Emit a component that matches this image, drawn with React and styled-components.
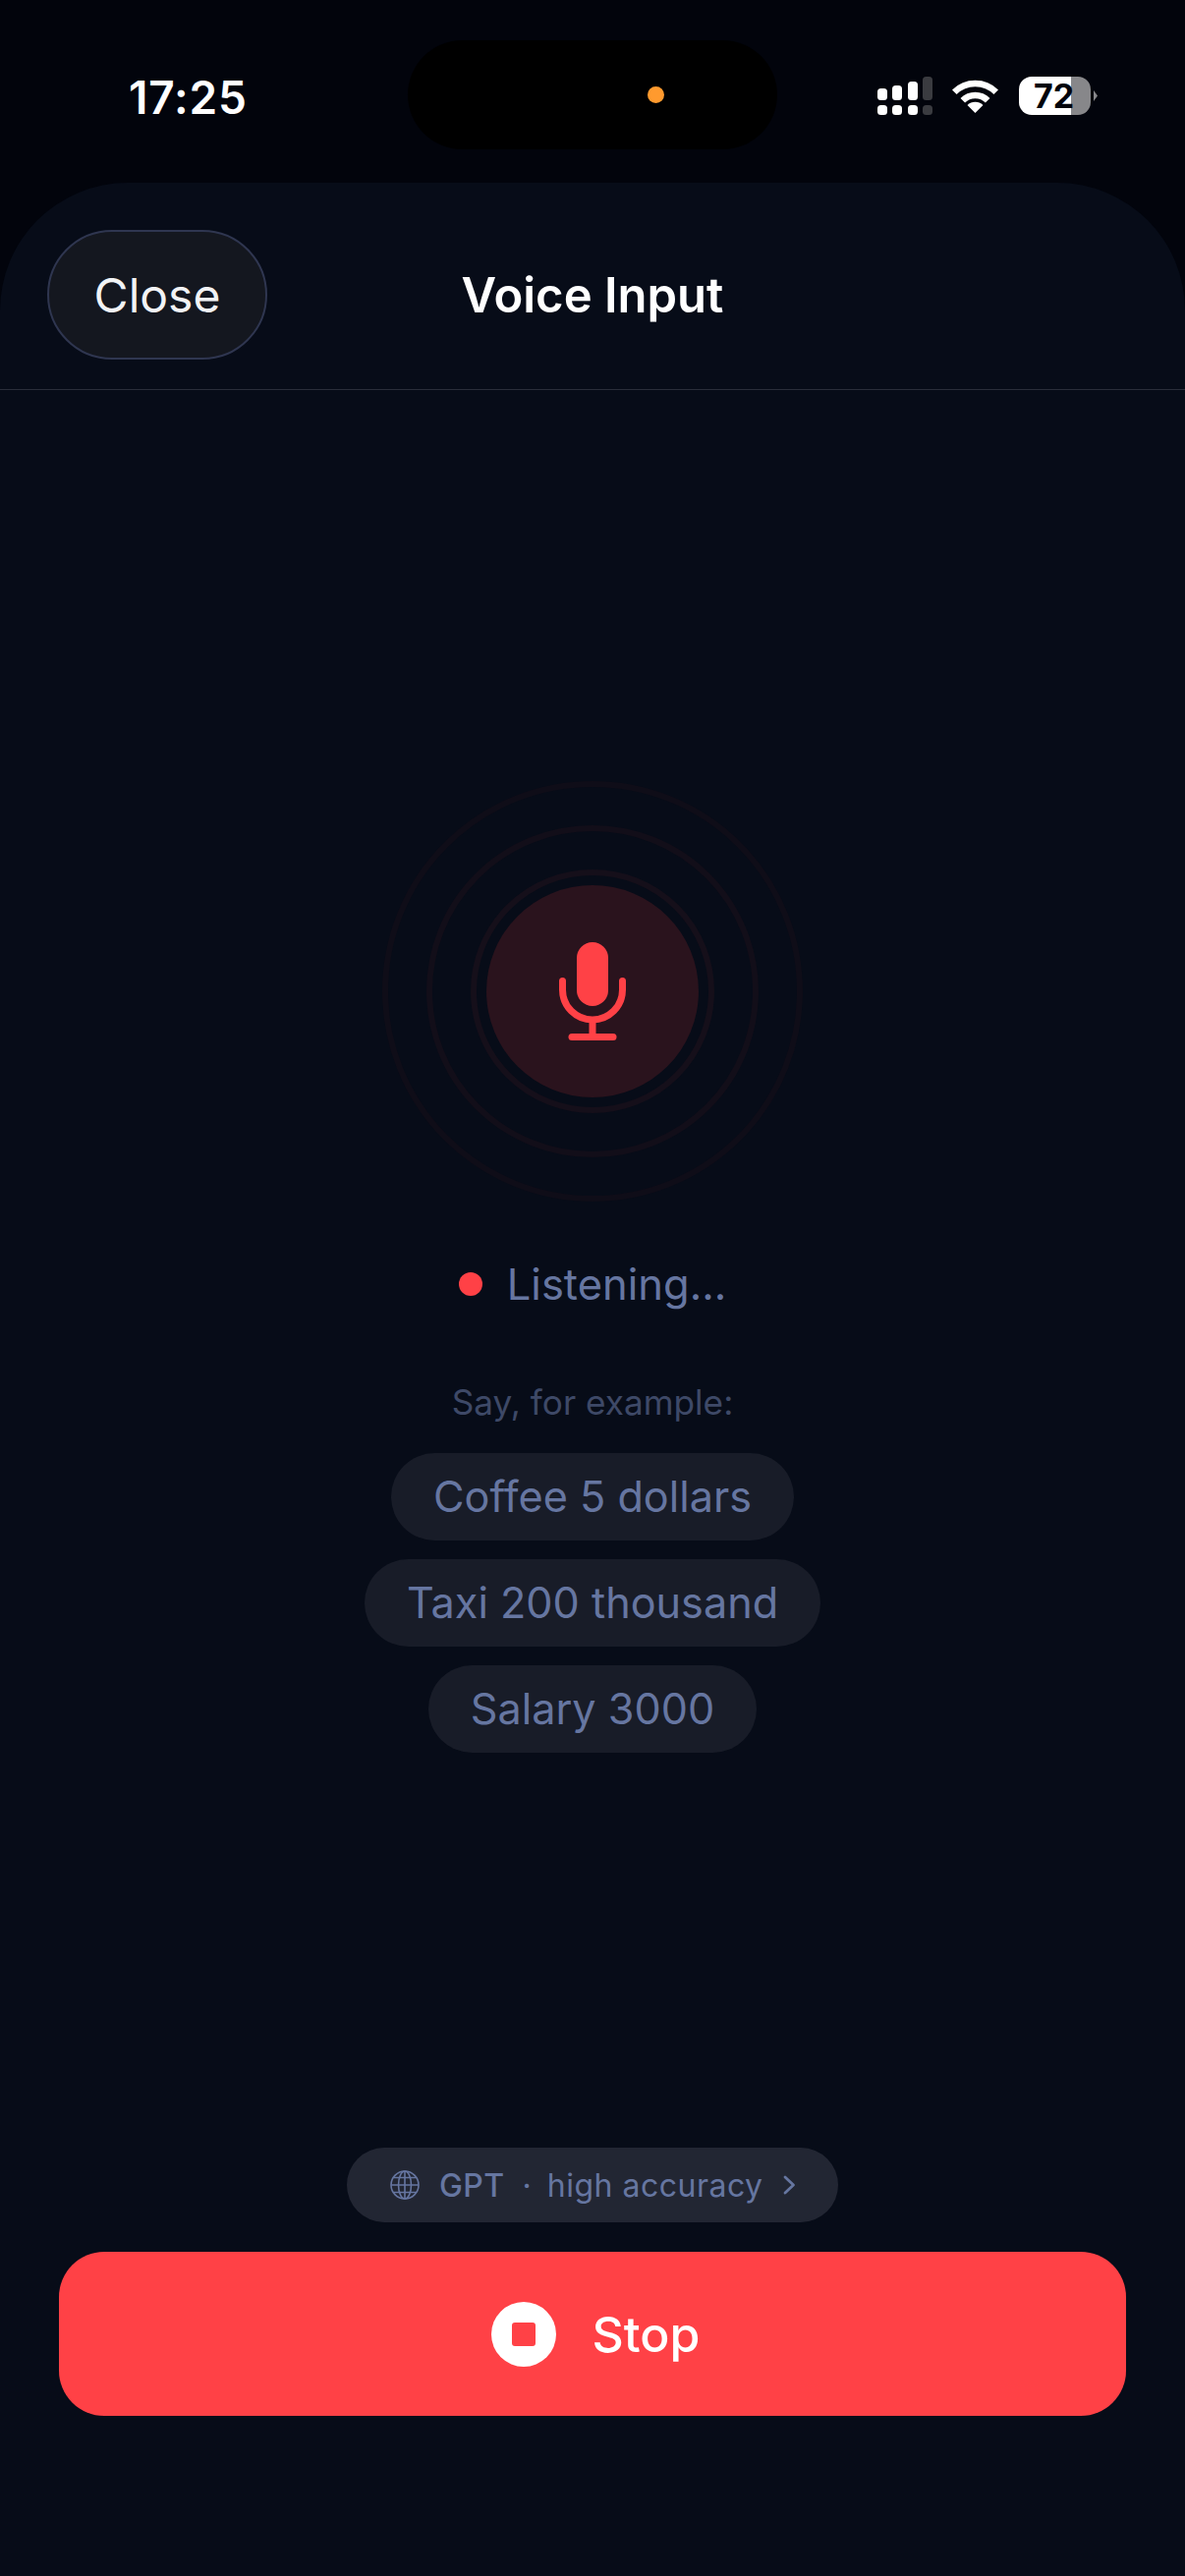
import React from "react";
import styled, { createGlobalStyle } from "styled-components";

const Global = createGlobalStyle`
  html, body { margin: 0; padding: 0; background: #02040c; }
  * { box-sizing: border-box; }
  #root { width: 1206px; }
`;

const Screen = styled.div`
  width: 1206px;
  height: 2622px;
  display: flex;
  flex-direction: column;
  overflow: hidden;
  background: #02040c;
  font-family: Inter, "Noto Sans", sans-serif;
  -webkit-font-smoothing: antialiased;
`;

const StatusBar = styled.header`
  height: 186px;
  flex: none;
  display: grid;
  grid-template-columns: 415px 376px 415px;
  align-items: start;
`;

const Time = styled.div`
  padding: 74px 0 0 131px;
  font-size: 46px;
  line-height: 50px;
  font-weight: 600;
  color: #fff;
  letter-spacing: 0.8px;
`;

const Island = styled.div`
  margin-top: 41px;
  height: 111px;
  border-radius: 56px;
  background: #000;
  display: flex;
  align-items: center;
  justify-content: flex-end;
  padding-right: 115px;
`;

const OrangeDot = styled.span`
  width: 17px;
  height: 17px;
  border-radius: 50%;
  background: #ff9a2e;
`;

const Indicators = styled.div`
  margin: 78px 0 0 102px;
  display: flex;
  align-items: flex-start;
`;

const SignalIcon = styled.svg`
  display: block;
  width: 56px;
  height: 39px;
`;

const WifiIcon = styled.svg`
  display: block;
  width: 49px;
  height: 34px;
  margin: 3px 0 0 19px;
`;

const Battery = styled.div`
  width: 73px;
  height: 39px;
  margin-left: 20px;
  border-radius: 13px;
  background: linear-gradient(90deg, #fff 0 53px, #87878a 53px 100%);
  display: flex;
  align-items: center;
  justify-content: center;
  font-size: 34px;
  line-height: 39px;
  font-weight: 700;
  color: #02040c;
  padding-right: 2px;
`;

const BatteryNub = styled.span`
  width: 4px;
  height: 11px;
  margin: 14px 0 0 3px;
  background: #87878a;
  border-radius: 0 3px 3px 0;
  clip-path: polygon(0 0, 100% 50%, 0 100%);
`;

const Sheet = styled.main`
  flex: 1;
  min-height: 0;
  display: flex;
  flex-direction: column;
  background: #070c18;
  border-radius: 130px 130px 0 0;
`;

const SheetHeader = styled.div`
  height: 211px;
  flex: none;
  display: grid;
  grid-template-columns: 1fr auto 1fr;
  align-items: center;
  padding: 18px 48px 0;
  border-bottom: 1.5px solid #2a2e3a;
`;

const CloseButton = styled.button`
  justify-self: start;
  width: 224px;
  height: 132px;
  border-radius: 66px;
  border: 2px solid #2f3650;
  background: #14171f;
  color: #f2f3f5;
  font-family: inherit;
  font-size: 48px;
  font-weight: 400;
  padding: 0;
`;

const Title = styled.h1`
  margin: 2px 0 0;
  font-size: 49px;
  line-height: 60px;
  font-weight: 600;
  color: #fff;
`;

const Content = styled.section`
  flex: 1;
  min-height: 0;
  display: flex;
  flex-direction: column;
  align-items: center;
  padding-top: 398px;
`;

const Rings = styled.div`
  width: 428px;
  height: 428px;
  display: grid;
  place-items: center;
  flex: none;
  & > * { grid-area: 1 / 1; }
`;

const Ring = styled.div`
  width: ${(p) => p.$size}px;
  height: ${(p) => p.$size}px;
  border-radius: 50%;
  border: 6px solid ${(p) => p.$color};
`;

const MicCircle = styled.div`
  width: 216px;
  height: 216px;
  border-radius: 50%;
  background: #2a131d;
  display: flex;
  align-items: center;
  justify-content: center;
`;

const MicIcon = styled.svg`
  display: block;
  width: 68px;
  height: 100px;
  margin-left: -1px;
`;

const StatusRow = styled.div`
  margin-top: 57px;
  display: flex;
  align-items: center;
  gap: 25px;
  height: 54px;
`;

const RecDot = styled.span`
  width: 24px;
  height: 24px;
  border-radius: 50%;
  background: #ff4146;
`;

const StatusText = styled.span`
  font-size: 43.5px;
  line-height: 54px;
  color: #6676a1;
`;

const HintLabel = styled.p`
  margin: 71px 0 0;
  font-size: 35.2px;
  line-height: 44px;
  color: #3e4967;
`;

const Chips = styled.div`
  margin-top: 30px;
  display: flex;
  flex-direction: column;
  align-items: center;
  gap: 19px;
`;

const Chip = styled.div`
  height: 89px;
  padding: 0 43px;
  border-radius: 45px;
  background: #181c28;
  color: #6676a1;
  font-size: 43.2px;
  line-height: 89px;
  white-space: nowrap;
`;

const Footer = styled.div`
  margin-top: auto;
  width: 100%;
  padding: 0 60px 163px;
  display: flex;
  flex-direction: column;
  align-items: center;
`;

const EnginePill = styled.button`
  width: 500px;
  height: 76px;
  border: 0;
  border-radius: 38px;
  background: #222633;
  color: #6676a1;
  display: flex;
  align-items: center;
  padding: 0 0 0 44px;
  font-family: inherit;
  font-size: 32px;
`;

const GlobeIcon = styled.svg`
  display: block;
  width: 30px;
  height: 30px;
  flex: none;
`;

const EngineName = styled.span`
  margin-left: 20px;
  font-weight: 500;
  letter-spacing: 0.4px;
`;

const Separator = styled.span`
  margin-left: 18px;
`;

const EngineNote = styled.span`
  margin-left: 16px;
  letter-spacing: 0.5px;
`;

const Chevron = styled.svg`
  display: block;
  width: 13px;
  height: 20px;
  margin-left: 20px;
`;

const StopButton = styled.button`
  margin-top: 30px;
  width: 100%;
  height: 167px;
  border: 0;
  border-radius: 46px;
  background: #ff4146;
  color: #fff;
  font-family: inherit;
  font-size: 50px;
  font-weight: 550;
  display: flex;
  align-items: center;
  justify-content: center;
  gap: 37px;
  padding: 0 0 0 6px;
`;

const StopBadge = styled.span`
  width: 66px;
  height: 66px;
  border-radius: 50%;
  background: #fff;
  display: flex;
  align-items: center;
  justify-content: center;
`;

const StopSquare = styled.span`
  width: 24px;
  height: 24px;
  border-radius: 3px;
  background: #ff4146;
`;

export default function App() {
  return (
    <Screen>
      <Global />
      <StatusBar>
        <Time>17:25</Time>
        <Island>
          <OrangeDot />
        </Island>
        <Indicators>
          <SignalIcon viewBox="0 0 56 39">
            <g fill="#fff">
              <rect x="0" y="12" width="10" height="12" rx="3.5" />
              <rect x="15" y="9" width="10" height="15" rx="3.5" />
              <rect x="31" y="5" width="10" height="19" rx="3.5" />
              <rect x="0" y="29" width="10" height="10" rx="3.5" />
              <rect x="15" y="29" width="10" height="10" rx="3.5" />
              <rect x="31" y="29" width="10" height="10" rx="3.5" />
            </g>
            <g fill="#3a3b40">
              <rect x="46" y="0" width="10" height="24" rx="3.5" />
              <rect x="46" y="29" width="10" height="10" rx="3.5" />
            </g>
          </SignalIcon>
          <WifiIcon viewBox="0 0 49 34">
            <g fill="none" stroke="#fff" strokeWidth="6.5">
              <path d="M3.3 12.8a30 30 0 0 1 42.4 0" />
              <path d="M11.8 21.3a18 18 0 0 1 25.4 0" />
            </g>
            <path d="M24.5 34 L16.5 26 a11.5 11.5 0 0 1 16 0 Z" fill="#fff" />
          </WifiIcon>
          <Battery>72</Battery>
          <BatteryNub />
        </Indicators>
      </StatusBar>
      <Sheet>
        <SheetHeader>
          <CloseButton>Close</CloseButton>
          <Title>Voice Input</Title>
        </SheetHeader>
        <Content>
          <Rings>
            <Ring $size={428} $color="#0f0d18" />
            <Ring $size={338} $color="#120e19" />
            <Ring $size={248} $color="#150f1a" />
            <MicCircle>
              <MicIcon viewBox="0 0 68 100">
                <rect x="18" y="0" width="32" height="65" rx="16" fill="#ff4146" />
                <g fill="none" stroke="#ff4146" strokeWidth="7" strokeLinecap="round">
                  <path d="M3.5 39.5v9a30.5 30.5 0 0 0 61 0v-9" />
                  <path d="M34 79v17" strokeLinecap="butt" />
                  <path d="M13 96.500h42" />
                </g>
              </MicIcon>
            </MicCircle>
          </Rings>
          <StatusRow>
            <RecDot />
            <StatusText>Listening...</StatusText>
          </StatusRow>
          <HintLabel>Say, for example:</HintLabel>
          <Chips>
            <Chip>Coffee 5 dollars</Chip>
            <Chip>Taxi 200 thousand</Chip>
            <Chip>Salary 3000</Chip>
          </Chips>
          <Footer>
            <EnginePill>
              <GlobeIcon viewBox="0 0 30 30" fill="none" stroke="#6676a1" strokeWidth="1.6">
                <circle cx="15" cy="15" r="14" />
                <ellipse cx="15" cy="15" rx="6.500" ry="14" />
                <path d="M15 1v28M1 15h28M3.500 7.500h23M3.500 22.500h23" />
              </GlobeIcon>
              <EngineName>GPT</EngineName>
              <Separator>·</Separator>
              <EngineNote>high accuracy</EngineNote>
              <Chevron viewBox="0 0 13 20" fill="none" stroke="#6676a1" strokeWidth="2.8" strokeLinecap="round" strokeLinejoin="round">
                <path d="M2 2l8.500 8L2 18" />
              </Chevron>
            </EnginePill>
            <StopButton>
              <StopBadge>
                <StopSquare />
              </StopBadge>
              Stop
            </StopButton>
          </Footer>
        </Content>
      </Sheet>
    </Screen>
  );
}
